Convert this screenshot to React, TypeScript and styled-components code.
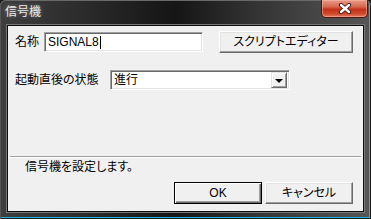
import React from "react";
import styled, { createGlobalStyle } from "styled-components";

const GlobalStyle = createGlobalStyle`
	html, body {
		margin: 0;
		padding: 0;
		background: #1c1c1c;
	}
	body {
		font-family: "Liberation Sans", "Noto Sans CJK JP", sans-serif;
		font-size: 12px;
		font-feature-settings: "palt";
		color: #000;
	}
`;

const StyledWindow = styled.div`
	width: 371px;
	height: 219px;
	box-sizing: border-box;
	display: flex;
	flex-direction: column;
	border-radius: 6px 6px 0 0;
	background:
		linear-gradient(90deg, #3e3e3e 0%, #2c2c2c 22%, #151515 47%, #353535 70%, #565656 100%);
	box-shadow: inset 0 1px 0 #6a6a6a, inset 1px 0 0 #555, inset -1px -1px 0 #1a1a1a,
		inset -2px -2px 0 #1eb4e6;
	overflow: hidden;
`;

const StyledTitleBar = styled.div`
	height: 25px;
	display: flex;
	justify-content: space-between;
	align-items: flex-start;
	padding: 0 3px 0 5px;
`;

const StyledTitle = styled.span`
	margin-top: 5px;
	line-height: 14px;
	color: #eaeaea;
	text-shadow: 0 0 4px rgba(255, 255, 255, 0.35);
`;

const StyledCloseButton = styled.div`
	width: 47px;
	height: 18px;
	margin-top: 0;
	box-sizing: border-box;
	display: flex;
	align-items: center;
	justify-content: center;
	border: 1px solid #4a1810;
	border-top: none;
	border-radius: 0 0 5px 5px;
	background: linear-gradient(180deg, #e89a88 0%, #d8674f 40%, #c2311a 55%, #d2472c 80%, #e27a5c 100%);
	box-shadow: inset 0 0 0 1px rgba(255, 200, 180, 0.45);
`;

const StyledClient = styled.div`
	flex: 1;
	margin: 0 6px 6px 6px;
	border: 1px solid #0c0c0c;
	box-shadow: 0 0 0 1px #777;
	background: #f0f0f0;
	display: flex;
	flex-direction: column;
	padding: 0 10px 7px 7px;
	margin-left: 7px;
	margin-right: 7px;
	margin-bottom: 7px;
`;

const StyledRow = styled.div<{ $top: number }>`
	display: flex;
	align-items: center;
	margin-top: ${(p) => p.$top}px;
`;

const StyledLabel = styled.span<{ $width: number }>`
	width: ${(p) => p.$width}px;
	line-height: 14px;
	white-space: nowrap;
`;

const StyledTextBox = styled.div<{ $width: number }>`
	width: ${(p) => p.$width}px;
	height: 20px;
	box-sizing: border-box;
	background: #fff;
	border: 1px solid;
	border-color: #a0a0a0 #fff #fff #a0a0a0;
	box-shadow: inset 1px 1px 0 #696969, inset -1px -1px 0 #e3e3e3;
	display: flex;
	align-items: center;
	padding: 0 3px;
	line-height: 14px;
	white-space: nowrap;
`;

const StyledCaret = styled.span`
	display: inline-block;
	width: 1px;
	height: 13px;
	margin-left: 1px;
	background: #000;
`;

const StyledButton = styled.div<{ $width: number; $default?: boolean }>`
	width: ${(p) => p.$width}px;
	height: 22px;
	box-sizing: border-box;
	display: flex;
	align-items: center;
	justify-content: center;
	background: #f0f0f0;
	line-height: 14px;
	white-space: nowrap;
	border: 1px solid;
	border-color: ${(p) => (p.$default ? "#000" : "#fff #696969 #696969 #fff")};
	box-shadow: ${(p) =>
		p.$default
			? "inset 1px 1px 0 #fff, inset -1px -1px 0 #696969, inset -2px -2px 0 #a0a0a0"
			: "inset -1px -1px 0 #a0a0a0, inset 1px 1px 0 #e3e3e3"};
`;

const StyledSelect = styled(StyledTextBox)`
	justify-content: space-between;
	padding: 0 2px 0 3px;
`;

const StyledArrowButton = styled.div`
	width: 16px;
	height: 16px;
	box-sizing: border-box;
	display: flex;
	align-items: center;
	justify-content: center;
	background: #f0f0f0;
	border: 1px solid;
	border-color: #e3e3e3 #696969 #696969 #e3e3e3;
	box-shadow: inset 1px 1px 0 #fff, inset -1px -1px 0 #a0a0a0;
`;

const StyledArrow = styled.span`
	width: 0;
	height: 0;
	border-left: 4px solid transparent;
	border-right: 4px solid transparent;
	border-top: 4px solid #000;
	margin-top: 1px;
`;

const StyledSpacer = styled.div`
	flex: 1;
`;

const StyledSeparator = styled.div`
	height: 1px;
	margin: 0 -8px 0 -5px;
	background: #a0a0a0;
	border-bottom: 1px solid #fff;
`;

const StyledStatus = styled.div`
	margin: 2px 0 0 10px;
	line-height: 14px;
`;

const StyledFooter = styled.div`
	display: flex;
	justify-content: flex-end;
	gap: 3px;
	margin-top: 8px;
`;

function CloseIcon() {
	return (
		<svg width="14" height="11" viewBox="0 0 14 11">
			<path d="M3 2 L11 9 M11 2 L3 9" stroke="#3a1410" strokeWidth="4.2" strokeLinecap="round" />
			<path d="M3 2 L11 9 M11 2 L3 9" stroke="#fff" strokeWidth="2.4" strokeLinecap="round" />
		</svg>
	);
}

export default function App() {
	return (
		<>
			<GlobalStyle />
			<StyledWindow>
				<StyledTitleBar>
					<StyledTitle>信号機</StyledTitle>
					<StyledCloseButton>
						<CloseIcon />
					</StyledCloseButton>
				</StyledTitleBar>
				<StyledClient>
					<StyledRow $top={5}>
						<StyledLabel $width={29}>名称</StyledLabel>
						<StyledTextBox $width={159}>
							SIGNAL8
							<StyledCaret />
						</StyledTextBox>
						<StyledButton $width={134} style={{ marginLeft: 16 }}>
							スクリプトエディター
						</StyledButton>
					</StyledRow>
					<StyledRow $top={17}>
						<StyledLabel $width={95}>起動直後の状態</StyledLabel>
						<StyledSelect $width={180}>
							進行
							<StyledArrowButton>
								<StyledArrow />
							</StyledArrowButton>
						</StyledSelect>
					</StyledRow>
					<StyledSpacer />
					<StyledSeparator />
					<StyledStatus>信号機を設定します。</StyledStatus>
					<StyledFooter>
						<StyledButton $width={88} $default>
							OK
						</StyledButton>
						<StyledButton $width={88}>キャンセル</StyledButton>
					</StyledFooter>
				</StyledClient>
			</StyledWindow>
		</>
	);
}
